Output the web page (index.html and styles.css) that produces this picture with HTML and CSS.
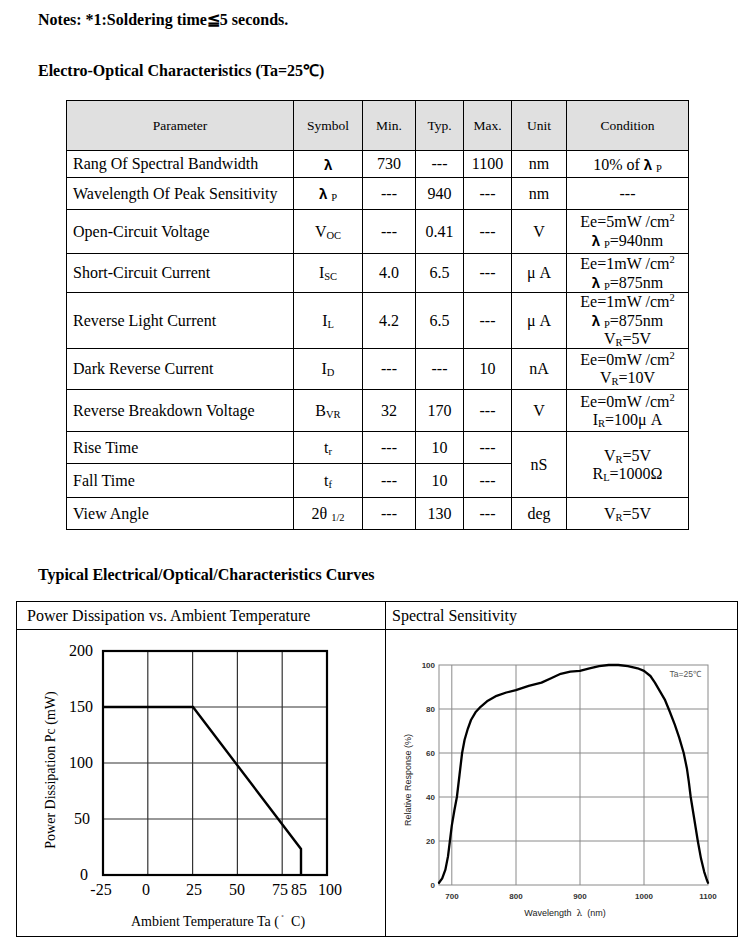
FILE: index.html
```html
<!DOCTYPE html>
<html>
<head>
<meta charset="utf-8">
<link rel="stylesheet" href="styles.css">
</head>
<body>
<div class="page">
  <p class="heading note">Notes: *1:Soldering time≦5 seconds.</p>
  <p class="heading section-title">Electro-Optical Characteristics (Ta=25℃)</p>

  <table class="spec">
    <colgroup>
      <col class="c-param"><col class="c-sym"><col class="c-min"><col class="c-typ"><col class="c-max"><col class="c-unit"><col class="c-cond">
    </colgroup>
    <tr class="r-head">
      <th>Parameter</th><th>Symbol</th><th>Min.</th><th>Typ.</th><th>Max.</th><th>Unit</th><th>Condition</th>
    </tr>
    <tr class="r1">
      <td class="param">Rang Of Spectral Bandwidth</td><td><span class="lam">λ</span></td><td>730</td><td>---</td><td>1100</td><td>nm</td><td>10% of <span class="lam">λ</span> <span class="sb">P</span></td>
    </tr>
    <tr class="r2">
      <td class="param">Wavelength Of Peak Sensitivity</td><td><span class="lam">λ</span> <span class="sb">P</span></td><td>---</td><td>940</td><td>---</td><td>nm</td><td>---</td>
    </tr>
    <tr class="r3">
      <td class="param">Open-Circuit Voltage</td><td>V<span class="sb">OC</span></td><td>---</td><td>0.41</td><td>---</td><td>V</td><td class="cond">Ee=5mW /cm<span class="sp">2</span><br><span class="lam">λ</span> <span class="sb">P</span>=940nm</td>
    </tr>
    <tr class="r4">
      <td class="param">Short-Circuit Current</td><td>I<span class="sb">SC</span></td><td>4.0</td><td>6.5</td><td>---</td><td>μ A</td><td class="cond">Ee=1mW /cm<span class="sp">2</span><br><span class="lam">λ</span> <span class="sb">P</span>=875nm</td>
    </tr>
    <tr class="r5">
      <td class="param">Reverse Light Current</td><td>I<span class="sb">L</span></td><td>4.2</td><td>6.5</td><td>---</td><td>μ A</td><td class="cond">Ee=1mW /cm<span class="sp">2</span><br><span class="lam">λ</span> <span class="sb">P</span>=875nm<br>V<span class="sb">R</span>=5V</td>
    </tr>
    <tr class="r6">
      <td class="param">Dark Reverse Current</td><td>I<span class="sb">D</span></td><td>---</td><td>---</td><td>10</td><td>nA</td><td class="cond">Ee=0mW /cm<span class="sp">2</span><br>V<span class="sb">R</span>=10V</td>
    </tr>
    <tr class="r7">
      <td class="param">Reverse Breakdown Voltage</td><td>B<span class="sb">VR</span></td><td>32</td><td>170</td><td>---</td><td>V</td><td class="cond">Ee=0mW /cm<span class="sp">2</span><br>I<span class="sb">R</span>=100μ A</td>
    </tr>
    <tr class="r8">
      <td class="param">Rise Time</td><td>t<span class="sb">r</span></td><td>---</td><td>10</td><td>---</td><td rowspan="2">nS</td><td rowspan="2" class="cond">V<span class="sb">R</span>=5V<br>R<span class="sb">L</span>=1000Ω</td>
    </tr>
    <tr class="r9">
      <td class="param">Fall Time</td><td>t<span class="sb">f</span></td><td>---</td><td>10</td><td>---</td>
    </tr>
    <tr class="r10">
      <td class="param">View Angle</td><td>2θ <span class="sb">1/2</span></td><td>---</td><td>130</td><td>---</td><td>deg</td><td>V<span class="sb">R</span>=5V</td>
    </tr>
  </table>

  <p class="heading curves-title">Typical Electrical/Optical/Characteristics Curves</p>

  <div class="charts">
    <div class="panel">
      <div class="panel-title">Power Dissipation vs. Ambient Temperature</div>
      <svg class="plot" width="368" height="306" viewBox="0 0 368 306">
        <g class="grid-dark">
          <line x1="130.8" y1="21" x2="130.8" y2="245"/>
          <line x1="175.6" y1="21" x2="175.6" y2="245"/>
          <line x1="220.4" y1="21" x2="220.4" y2="245"/>
          <line x1="265.2" y1="21" x2="265.2" y2="245"/>
          <line x1="86" y1="77" x2="310" y2="77"/>
          <line x1="86" y1="133" x2="310" y2="133"/>
          <line x1="86" y1="189" x2="310" y2="189"/>
        </g>
        <rect class="frame-dark" x="86" y="21" width="224" height="224"/>
        <polyline class="curve-dark" points="86,77 176,77 284,219 284,245"/>
        <g class="tick-serif" text-anchor="end">
          <text x="76" y="26">200</text>
          <text x="76" y="82">150</text>
          <text x="76" y="138">100</text>
          <text x="73" y="194">50</text>
          <text x="71" y="250">0</text>
        </g>
        <g class="tick-serif" text-anchor="middle">
          <text x="84" y="265">-25</text>
          <text x="129" y="265">0</text>
          <text x="177" y="265">25</text>
          <text x="220" y="265">50</text>
          <text x="263" y="265">75</text>
          <text x="282" y="265">85</text>
          <text x="313" y="265">100</text>
        </g>
        <text class="axis-serif" x="201" y="296" text-anchor="middle">Ambient Temperature Ta (<tspan class="deg" dy="-5"> ˚</tspan><tspan dy="5">  C)</tspan></text>
        <text class="axis-serif" x="0" y="0" text-anchor="middle" transform="translate(38 140) rotate(-90)">Power Dissipation Pc (mW)</text>
      </svg>
    </div>
    <div class="panel panel-right">
      <div class="panel-title">Spectral Sensitivity</div>
      <svg class="plot" width="351" height="306" viewBox="0 0 351 306">
        <g transform="translate(-1 -1)">
          <g class="grid-light">
            <line x1="66.8" y1="36" x2="66.8" y2="256"/>
            <line x1="131" y1="36" x2="131" y2="256"/>
            <line x1="195" y1="36" x2="195" y2="256"/>
            <line x1="259" y1="36" x2="259" y2="256"/>
            <line x1="54" y1="80" x2="323" y2="80"/>
            <line x1="54" y1="124" x2="323" y2="124"/>
            <line x1="54" y1="168" x2="323" y2="168"/>
            <line x1="54" y1="212" x2="323" y2="212"/>
          </g>
          <rect class="frame-light" x="54" y="36" width="269" height="220"/>
          <polyline class="curve-spec" points="54,253.8 57.2,249.4 60.4,240.6 63,227.4 64.9,212 66.8,196.6 69.4,181.2 71.9,168 74.5,146 77.1,124 79.6,110.8 82.8,99.8 86,91 90.5,83.3 95.6,77.8 102,72.3 111.6,66.8 121.3,63.5 130.9,61.1 143.7,56.9 156.5,53.6 166.1,49.2 175.7,44.8 185.3,42.6 194.9,41.9 204.5,39.3 214.1,37.1 223.7,36 233.3,36 242.9,37.1 252.6,39.3 259,41.9 265.4,47 269.9,53.6 275,62.4 280.1,71.2 284.6,82.2 289.7,95.4 294.2,108.6 298.7,124 301.9,139.4 303.8,152.6 305.7,168 308.9,187.8 312.8,212 316,229.6 319.2,242.8 321.7,250.5 323,253.8"/>
          <g class="tick-sans" text-anchor="end">
            <text x="50" y="39">100</text>
            <text x="50" y="83">80</text>
            <text x="50" y="127">60</text>
            <text x="50" y="171">40</text>
            <text x="50" y="215">20</text>
            <text x="50" y="259">0</text>
          </g>
          <g class="tick-sans" text-anchor="middle">
            <text x="67" y="270">700</text>
            <text x="131" y="270">800</text>
            <text x="195" y="270">900</text>
            <text x="259" y="270">1000</text>
            <text x="323" y="270">1100</text>
          </g>
          <text class="ta" x="316" y="48" text-anchor="end">Ta=25℃</text>
          <text class="axis-sans" x="180" y="287" text-anchor="middle">Wavelength  <tspan class="lam-thin">λ</tspan>  (nm)</text>
          <text class="axis-sans" x="0" y="0" text-anchor="middle" transform="translate(26 151) rotate(-90)">Relative Response (%)</text>
        </g>
      </svg>
    </div>
  </div>
</div>
</body>
</html>
```

FILE: styles.css
```css
body {
  margin: 0;
  background: #fff;
  color: #000;
  font-family: "Liberation Serif", "Times New Roman", serif;
}

.page {
  width: 750px;
  padding-top: 11px;
}

.heading {
  margin: 0 0 0 38px;
  font-size: 16px;
  font-weight: bold;
  line-height: 18px;
}

.note {
  margin-bottom: 33px;
}

.section-title {
  margin-bottom: 20px;
}

.curves-title {
  margin-top: 36px;
  margin-bottom: 17px;
}

/* ---------- spec table ---------- */
.spec {
  margin-left: 66px;
  width: 623px;
  border-collapse: collapse;
  table-layout: fixed;
  font-size: 16px;
}

.c-param { width: 227px; }
.c-sym { width: 69px; }
.c-min { width: 53px; }
.c-typ { width: 48px; }
.c-max { width: 48px; }
.c-unit { width: 55px; }
.c-cond { width: 122px; }

.spec th,
.spec td {
  border: 1px solid #000;
  padding: 0;
  text-align: center;
  vertical-align: middle;
  line-height: 18px;
  white-space: nowrap;
}

.spec th {
  background: #e0e0e0;
  font-weight: normal;
  font-size: 13.5px;
}

.spec td.param {
  text-align: left;
  padding-left: 6px;
}

.spec td.cond {
  line-height: 18px;
}

.r-head { height: 50px; }
.r1 { height: 27px; }
.r2 { height: 32px; }
.r3 { height: 44px; }
.r4 { height: 39px; }
.r5 { height: 54px; }
.r6 { height: 41px; }
.r7 { height: 42px; }
.r8 { height: 32px; }
.r9 { height: 34px; }
.r10 { height: 32px; }

.lam {
  font-family: "Noto Sans CJK SC", "DejaVu Sans", sans-serif;
  font-weight: bold;
  font-size: 13.5px;
}

.sb {
  font-size: 10.5px;
  line-height: 0;
  vertical-align: -2px;
}

.sp {
  font-size: 10.5px;
  line-height: 0;
  vertical-align: 6px;
}

/* ---------- charts ---------- */
.charts {
  margin-left: 16px;
  width: 722px;
  box-sizing: border-box;
  border: 1px solid #000;
  display: grid;
  grid-template-columns: 368px 352px;
}

.panel-right {
  border-left: 1px solid #000;
}

.panel-title {
  height: 27px;
  line-height: 27px;
  border-bottom: 1px solid #000;
  padding-left: 10px;
  font-size: 16px;
}

.panel-right .panel-title {
  padding-left: 6px;
}

.plot {
  display: block;
}

.grid-dark line {
  stroke: #333;
  stroke-width: 1.2;
}

.frame-dark {
  fill: none;
  stroke: #000;
  stroke-width: 2.2;
}

.curve-dark {
  fill: none;
  stroke: #000;
  stroke-width: 2.4;
  stroke-linejoin: miter;
}

.tick-serif {
  font-family: "Liberation Serif", serif;
  font-size: 16px;
  fill: #000;
}

.axis-serif {
  font-family: "Liberation Serif", serif;
  font-size: 14px;
  fill: #000;
  white-space: pre;
}

.deg {
  font-size: 9px;
}

.grid-light line {
  stroke: #8a8a8a;
  stroke-width: 1;
}

.frame-light {
  fill: none;
  stroke: #8a8a8a;
  stroke-width: 1;
}

.curve-spec {
  fill: none;
  stroke: #000;
  stroke-width: 2.3;
  stroke-linejoin: round;
  stroke-linecap: round;
}

.tick-sans {
  font-family: "Liberation Sans", Arial, sans-serif;
  font-size: 8px;
  font-weight: bold;
  fill: #333;
}

.axis-sans {
  font-family: "Liberation Sans", Arial, sans-serif;
  font-size: 9px;
  fill: #222;
  white-space: pre;
}

.lam-thin {
  font-family: "DejaVu Serif", serif;
  font-size: 9px;
}

.ta {
  font-family: "Liberation Sans", Arial, sans-serif;
  font-size: 8.5px;
  fill: #555;
}
```
